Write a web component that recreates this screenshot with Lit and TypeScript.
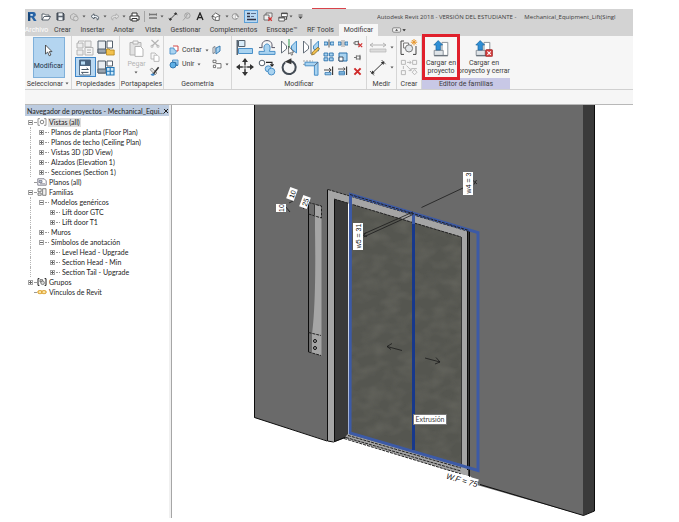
import { LitElement, html, svg, css, nothing, type SVGTemplateResult } from "lit";
import { customElement, property } from "lit/decorators.js";
import { classMap } from "lit/directives/class-map.js";

type Glyph = { w: number; h: number; art: SVGTemplateResult };

const LINE = "#4a5560";
const BLUE = "#4a90c8";
const PALE = "#a9d3f0";
const GREY = "#b4b4b4";

const GLYPHS: Record<string, Glyph> = {
  logo: { w: 10, h: 11, art: svg`<path d="M1 1h5.2a2.6 2.6 0 0 1 .8 5.1L9.6 10H6.8L4.6 6.6H3.2V10H1z" fill="#2763a5"/><path d="M3.2 3h2.6v1.8H3.2z" fill="#cfe3f4"/><path d="M1 1 3.2 3v7H1z" fill="#174678"/>` },
  open: { w: 10, h: 9, art: svg`<path d="M1 8V2h2.5l1 1H8v1.5M1 8l2-3.5h6.5L7.5 8z" fill="#fff" stroke=${LINE} stroke-width=".9"/>` },
  save: { w: 9, h: 9, art: svg`<path d="M1 1h6l1 1v6H1z" fill="#5b6470" stroke="#3b434c"/><path d="M2.5 1.2h4v2.6h-4zM2.5 5.3h4V8h-4z" fill="#eef2f5"/>` },
  sync: { w: 10, h: 10, art: svg`<path d="M1.5 3.5 4.5 1.5l3.5 2v3L5 8.5l-3.5-2z" fill="none" stroke="#a8a8a8"/><circle cx="6.8" cy="6.5" r="2.3" fill="#d8d8d8" stroke="#a8a8a8"/>` },
  undo: { w: 10, h: 8, art: svg`<path d="M4 .8 1 3.4 4 6V4.5c2.2-.2 3.6.4 3.3 2.7C10 5 8.5 2.2 4 2.3z" fill="#eef3f8" stroke=${LINE} stroke-width=".9"/>` },
  redo: { w: 10, h: 8, art: svg`<path d="M6 .8 9 3.4 6 6V4.5c-2.2-.2-3.6.4-3.3 2.7C0 5 1.5 2.2 6 2.3z" fill="#dedede" stroke="#aaa" stroke-width=".9"/>` },
  print: { w: 11, h: 10, art: svg`<path d="M3 4V1h5v3" fill="#fff" stroke="#333"/><path d="M1 4h9v4H1z" fill="#fff" stroke="#333"/><path d="M3 6.5h5V9H3z" fill="#fff" stroke="#333"/>` },
  measure: { w: 10, h: 7, art: svg`<path d="M1 1.5h8M1 5h8" stroke="#777" stroke-width="1.4"/><path d="M1.5 0v3M8.5 0v3" stroke="#777" stroke-width=".6"/>` },
  dim: { w: 10, h: 9, art: svg`<path d="M2 7.5 8 1.5" stroke="#333" stroke-width=".9"/><path d="M.6 6.4 3 8.6M7 .5l2.4 2.2M1.6 8l.6-2 1.4 1.4zM8.4 1l-.6 2-1.4-1.4z" fill="#333" stroke="#333" stroke-width=".8"/>` },
  tag: { w: 9, h: 9, art: svg`<circle cx="5.4" cy="3.6" r="2.7" fill="none" stroke="#9a9a9a" stroke-width=".9"/><path d="M3.4 5.5 1 8.4M4.6 4.8V2.6h1.4" stroke="#9a9a9a" fill="none" stroke-width=".8"/>` },
  letter: { w: 8, h: 9, art: svg`<path d="M1 8 4 1l3 7M2 5.6h4" fill="none" stroke="#222" stroke-width="1.3"/>` },
  home: { w: 10, h: 10, art: svg`<path d="M.7 4.6 4.6 1l4.6 2.8-1 .8v3.8H4.4L1.8 7V4z" fill="#fff" stroke="#444" stroke-width=".8"/><path d="M1.6 4 4.4 5.4V8.4M4.4 5.4 8.6 3.8" stroke="#444" stroke-width=".7" fill="none"/>` },
  section: { w: 9, h: 9, art: svg`<circle cx="4" cy="4.5" r="2.8" fill="#e9e9e9" stroke="#888" stroke-width=".8"/><path d="M4.6.7 8.3 4.5 4.6 8.3z" fill="#999"/><path d="M5 3v3h2z" fill="#fff"/>` },
  thin: { w: 11, h: 9, art: svg`<path d="M1 1.5h3M1 4.5h3M1 7.5h9" stroke="#334" stroke-width="1.3"/><path d="M5 1.5h5M5 4.5h3" stroke="#346" stroke-width=".7"/>` },
  closeWin: { w: 10, h: 10, art: svg`<path d="M3 3V1h6v4M1 3h5v5H1z" fill="#eee" stroke="#555" stroke-width=".8"/><path d="m5.4 5.4 3.4 3.4m0-3.4L5.4 8.8" stroke="#d22f2f" stroke-width="1.3"/>` },
  switchWin: { w: 10, h: 10, art: svg`<path d="M3.5 1h5.8v3.6H3.5zM.8 5.2h5.6V9H.8z" fill="#fff" stroke="#444" stroke-width=".8"/><path d="M3.5 1.6h5.8M.8 5.9h5.6M8.6 5v2.4H7.2" stroke="#444" fill="none"/>` },
  caret: { w: 4, h: 3, art: svg`<path d="M.5.6h3L2 2.4z" fill="#555"/>` },
  menu: { w: 5, h: 6, art: svg`<path d="M.5 1h4" stroke="#444" stroke-width=".8"/><path d="M.3 2.6h4.4L2.5 5z" fill="#444"/>` },
  panelMenu: { w: 14, h: 6, art: svg`<rect x=".6" y=".8" width="8" height="4.4" rx="1.2" fill="#eee" stroke="#666" stroke-width=".7"/><path d="M3.2 3.8h2.8L4.6 2z" fill="#333"/><path d="M10.4 2.2h3.4L12.1 4.2z" fill="#222"/>` },
  cursor: { w: 9, h: 13, art: svg`<path d="M1.5 1v9l2.2-1.9 1.5 3.7 1.7-.8-1.6-3.4H8z" fill="#fff" stroke="#333" stroke-width=".8"/>` },
  typesOff: { w: 18, h: 17, art: svg`<path d="M1 4h6v5H1zM9 2h6v6H9zM1 11h6v5H1z" fill="#eee" stroke=${GREY}/><path d="M2.5 4V2h6M9 8.5h8V16H9z" fill="#f4f4f4" stroke=${GREY}/><path d="M11 11h4M11 13.5h4" stroke=${GREY}/>` },
  typesFolder: { w: 18, h: 17, art: svg`<path d="M1 2h7.5v12H1z" fill="#e9edf1" stroke="#55606c"/><path d="M10 2h5.500v7H10z" fill="#fff" stroke="#55606c"/><path d="M1 10h8v4H1z" fill="#9aa5b0" stroke="#55606c"/><path d="M9.5 10h2.6l.8 1h4.3v5H9.5z" fill="#f2c14e" stroke="#b38316" stroke-width=".8"/>` },
  props: { w: 16, h: 17, art: svg`<path d="M2.500 1h11v15h-11z" fill="#fff" stroke="#55708c"/><path d="M2.500 1h11v6h-11z" fill="#4a6480"/><path d="M4 2.4h4v3.2H4z" fill="#b8dcf5"/><path d="M4.5 10.5h7M9.6 9l1.9 1.5M4.500 13.400h7M6.3 15l-1.8-1.6" stroke="#345" stroke-width=".9" fill="none"/>` },
  typesGrid: { w: 18, h: 17, art: svg`<path d="M1 2h7.5v12H1z" fill="#e9edf1" stroke="#55606c"/><path d="M10 2h5.5v5H10z" fill="#fff" stroke="#55606c"/><path d="M1 10h8v4H1z" fill="#9aa5b0" stroke="#55606c"/><path d="M9.5 8.5H17V16H9.5zM13.2 8.5V16M9.5 12.2H17" fill="#cfeafb" stroke="#2277b8" stroke-width="1.1"/>` },
  paste: { w: 15, h: 17, art: svg`<path d="M1 2.5h11V15H1z" fill="#e2e2e2" stroke=${GREY}/><path d="M4 1h5v3H4z" fill="#f5f5f5" stroke=${GREY}/><path d="M6 6.5h5.5L14 9v7.4H6z" fill="#fff" stroke=${GREY}/>` },
  cut: { w: 10, h: 9, art: svg`<path d="M1.5 1 8 7M8.5 1 2 7" stroke=${GREY} stroke-width="1.2"/><path d="M1 6.4h2v1.8H1zM7 6.4h2v1.8H7z" fill="none" stroke=${GREY} stroke-width=".8"/>` },
  copyClip: { w: 10, h: 10, art: svg`<path d="M1 1h4l1.5 1.5V7H1z" fill="#f7f7f7" stroke=${GREY} stroke-width=".9"/><path d="M4 3.2h3.4L9 4.8v4.6H4z" fill="#fff" stroke=${GREY} stroke-width=".9"/>` },
  brush: { w: 11, h: 11, art: svg`<path d="M1 3.5 3 2l5 5-2 2z" fill="#dcdcdc" stroke="#777" stroke-width=".7"/><path d="M4 8.5 9.6 1.2" stroke="#333" stroke-width="1.5"/><path d="M1.5 8.5c2-1.6 4-1 4 .2S3 10.6 1.5 8.5z" fill="#3d86c6"/>` },
  cutGeo: { w: 10, h: 10, art: svg`<path d="M4 1h5v5H7" fill="#fff" stroke="#c33" stroke-width=".9"/><path d="M1 3h4v1.6c1.4 0 2.2 1 2.2 2.2A2.3 2.3 0 0 1 5 9H1z" fill=${PALE} stroke=${BLUE} stroke-width=".9"/>` },
  joinGeo: { w: 10, h: 10, art: svg`<path d="M3.6 1H9v5.2H7.3" fill=${PALE} stroke=${BLUE} stroke-width=".9"/><circle cx="4" cy="6" r="3" fill="#5fb0e6" stroke="#2b72ac" stroke-width=".9"/><path d="M3.6 1v2.4M4 3.4h3v3h2" stroke="#2b72ac" fill="none" stroke-width=".8"/>` },
  face: { w: 10, h: 10, art: svg`<path d="M1 2.5 3 1.5v6l-2 1z" fill="#fff" stroke=${LINE} stroke-width=".7"/><path d="M4 3l4-2v5L4 9z" fill=${PALE} stroke="#2b72ac" stroke-width=".9"/>` },
  paint: { w: 10, h: 10, art: svg`<path d="M1 1.2h3v2.4H1zM3.8 4.6H9V9H5M1.4 6.2h2.2v2.4H1.4z" fill="#fff" stroke="#555" stroke-width=".8"/>` },
  align: { w: 18, h: 17, art: svg`<path d="M1.2 1v15" stroke="#345" stroke-width="1.2"/><path d="M2.5 1.5h6.4v6H2.5z" fill="#d9ecf9" stroke="#55606c"/><path d="M2.5 9.5h14v5h-14z" fill=${PALE} stroke=${BLUE}/>` },
  offset: { w: 18, h: 17, art: svg`<path d="M1 8.600h3.200C3.200 4 5.500 1.600 9 1.600S14.800 4 13.800 8.600H17" fill="none" stroke="#556" stroke-width="1"/><path d="M1 15.4v-3h5.600C5 8 6.5 5 9 5s4 3 2.400 7.400H17v3z" fill=${PALE} stroke=${BLUE}/>` },
  mirrorPick: { w: 18, h: 17, art: svg`<path d="M1.500 14V2l5 5v3z" fill="#fff" stroke="#55606c" stroke-width=".9"/><path d="M16.500 14V2l-5 5v3z" fill=${PALE} stroke=${BLUE}/><path d="M9 0v10" stroke="#2a9a4a" stroke-width="1"/><path d="M8.6 7v8l1.8-1.4 1.1 2.6 1.2-.6-1-2.4h2.1z" fill="#fff" stroke="#222" stroke-width=".6"/>` },
  mirrorDraw: { w: 18, h: 17, art: svg`<path d="M1.500 14V2l5 5v3z" fill="#fff" stroke="#55606c" stroke-width=".9"/><path d="M16.500 12V2l-5 5v3z" fill=${PALE} stroke=${BLUE}/><path d="M9 0v15" stroke="#345" stroke-width=".8"/><path d="m9.6 16 .8-2.8 5.6-5 1.6 1.8-5.4 5.2z" fill="#f2c14e" stroke="#7a5a14" stroke-width=".7"/>` },
  move: { w: 18, h: 18, art: svg`<path d="M9 1v16M1 9h16" stroke="#333" stroke-width="1.5"/><path d="m9 0 3 4H6zM9 18l3-4H6zM0 9l4-3v6zM18 9l-4-3v6z" fill="#333"/><circle cx="9" cy="9" r="2.3" fill="#f5f5f5"/><path d="M9 7v4M7 9h4" stroke="#333" stroke-width=".7"/>` },
  copy: { w: 18, h: 17, art: svg`<circle cx="4" cy="4" r="2.8" fill="#fff" stroke="#55606c"/><path d="M8 3.4h6V7M12.4 5.4 14 7.2l1.6-1.8" fill="none" stroke="#222" stroke-width="1.1"/><circle cx="10.2" cy="9.8" r="3" fill=${PALE} stroke=${BLUE}/><circle cx="13.4" cy="12.6" r="3.4" fill=${PALE} stroke=${BLUE}/>` },
  rotate: { w: 18, h: 18, art: svg`<path d="M5.2 4.2A6.6 6.6 0 1 0 10.4 3" fill="none" stroke="#444c55" stroke-width="2"/><path d="M4.6 3.8 11.4.2v6z" fill="#333"/>` },
  trim: { w: 18, h: 17, art: svg`<path d="M1 2h10M1 5.4h7.6" stroke="#9a9a9a" stroke-width=".9" stroke-dasharray="2 1"/><path d="M3 3.200h13v13h-3.600V6.800H3z" fill=${PALE} stroke=${BLUE}/><path d="M12.400 6.800 16 3.200" stroke="#445" stroke-width=".8"/>` },
  split: { w: 10, h: 9, art: svg`<path d="M0 3h3.6v3H0zM6.4 3H10v3H6.4z" fill=${PALE} stroke="#2b72ac" stroke-width=".9"/><path d="M5 .5v8" stroke="#333" stroke-width=".8"/>` },
  splitGap: { w: 10, h: 9, art: svg`<path d="M0 3h3v3H0zM7 3h3v3H7z" fill=${PALE} stroke="#2b72ac" stroke-width=".9"/><path d="M4 1v7M6 1v7" stroke="#777" stroke-width=".7"/>` },
  unpin: { w: 10, h: 9, art: svg`<path d="M0 4h2M2 2v4M2 2.6h3.4v3H2M5.4 1.6v5" stroke="#666" stroke-width=".9" fill="none"/><path d="m5.4 4.4 3.8 3.8m0-3.8L5.4 8.2" stroke="#d22f2f" stroke-width="1.2"/>` },
  array: { w: 11, h: 10, art: svg`<path d="M1 1h3.8v3H1zM6.4 1h3.8v3H6.4zM1 5.8h3.8v3H1zM6.4 5.8h3.8v3H6.4z" fill=${PALE} stroke="#2b72ac" stroke-width=".9"/>` },
  scale: { w: 10, h: 10, art: svg`<path d="M1 1h8v8H1z" fill=${PALE} stroke="#2b72ac"/><path d="M1 5h4v4H1z" fill="#fff" stroke="#345" stroke-width=".9"/>` },
  pin: { w: 9, h: 9, art: svg`<path d="M1 4.5h2.4M3.4 2.4v4.2M3.4 3H7v3H3.4M7 1.8v5.4" stroke="#666" stroke-width=".9" fill="none"/>` },
  extend: { w: 10, h: 10, art: svg`<path d="M8.6.5v8.6" stroke="#333" stroke-width="1.1"/><path d="M0 4h7M5 2l2.2 2L5 6" stroke="#333" fill="none" stroke-width=".9"/><path d="M1 6.6h6v2.2H1z" fill=${PALE} stroke="#2b72ac" stroke-width=".8"/>` },
  extendAll: { w: 10, h: 10, art: svg`<path d="M8.6.5v8.6" stroke="#333" stroke-width="1.1"/><path d="M0 3h7M5.4 1.4 7.2 3 5.4 4.6" stroke="#333" fill="none" stroke-width=".8"/><path d="M1 5.4h5.6v3.4H1zM1 7.1h5.6" fill=${PALE} stroke="#2b72ac" stroke-width=".8"/>` },
  remove: { w: 9, h: 9, art: svg`<path d="m1.4 1.4 6.2 6.2m0-6.2L1.4 7.6" stroke="#cf2a2a" stroke-width="2"/>` },
  measureOff: { w: 18, h: 11, art: svg`<path d="M1 3h16M4 1 1 3l3 2M14 1l3 2-3 2" fill="none" stroke=${GREY}/><path d="M1 7h16v3H1z" fill="#dcdcdc" stroke=${GREY} stroke-width=".7"/>` },
  dimension: { w: 18, h: 17, art: svg`<path d="M3 14.4 14.6 3.2" stroke="#333"/><path d="M1 12l4 4.4M12.6 1l4 4.2" stroke="#333" stroke-width=".8"/><path d="m2.2 15 1-3.6 2.6 2.8zM15.4 2.4l-1 3.6-2.6-2.8z" fill="#333"/>` },
  group: { w: 18, h: 17, art: svg`<path d="M4 2H1v13.4h3M13 15.4h3V7" fill="none" stroke="#444"/><path d="M3.6 4h5v5h-5z" fill="#fff" stroke="#777"/><circle cx="9" cy="9.4" r="3.6" fill="#e3e7ea" stroke="#777"/><path d="M14 0v6.4M10.8 3.2h6.4M11.8 1l4.4 4.4M16.2 1l-4.4 4.4" stroke="#e8962a" stroke-width="1"/>` },
  similar: { w: 18, h: 17, art: svg`<path d="M1.4 1.4h4v4h-4zM12.6 1.4h4v4h-4zM1.4 11.6h4v4h-4zM12 9.6h4.8M7 3.4h4M9.6 2l1.6 1.4L9.6 5M3.4 7v3M6.6 6.6l4.4 4.6M8.6 11.6h2.6V9M14.6 10.6l2.4 2.6-2.4 2.6-2.4-2.6z" fill="none" stroke=${GREY} stroke-width=".9"/>` },
  load: { w: 16, h: 17, art: svg`<path d="M9 2.4h5.8v13H9z" fill="#fff" stroke="#8b939b"/><path d="M1.2 10.4h9v5h-9z" fill="#dfe4e8" stroke="#8b939b"/><path d="M1.2 15.8h13.6" stroke="#59626b"/><path d="M5.2.6 9.6 5H7.4v5H3V5H.8z" fill="#2f8fd6" stroke="#1c659e" stroke-width=".7"/>` },
  loadClose: { w: 18, h: 17, art: svg`<path d="M9 2.4h5.8v13H9z" fill="#fff" stroke="#8b939b"/><path d="M1.2 10.4h9v5h-9z" fill="#dfe4e8" stroke="#8b939b"/><path d="M1.2 15.8h10" stroke="#59626b"/><path d="M5.2.6 9.6 5H7.4v5H3V5H.8z" fill="#2f8fd6" stroke="#1c659e" stroke-width=".7"/><rect x="10.6" y="9.6" width="7" height="7" rx="1" fill="#d23c3c" stroke="#8e1f1f" stroke-width=".6"/><path d="m12.4 11.4 3.4 3.4m0-3.4-3.4 3.4" stroke="#fff" stroke-width="1.1"/>` },
  views: { w: 10, h: 8, art: svg`<path d="M3 .7H1v6.6h2M7 .7h2v6.6H7" fill="none" stroke="#777" stroke-width=".8"/><circle cx="5" cy="4" r="1.8" fill="#fff" stroke="#666" stroke-width=".8"/>` },
  sheets: { w: 10, h: 8, art: svg`<path d="M.8.8h6.4l2 2v4.4H.8z" fill="#fff" stroke="#667" stroke-width=".8"/><path d="M2 2.6h3v2H2zM3 5.8h5" fill="#bcd" stroke="#667" stroke-width=".7"/>` },
  families: { w: 10, h: 8, art: svg`<path d="M1 .7h3.2v3H1zM5.6.7H9v6.6H5.6zM1 5h3.2v2.3H1z" fill="#f2f2f2" stroke="#666" stroke-width=".8"/>` },
  groups: { w: 10, h: 8, art: svg`<path d="M2.4.6H1v6.8h1.4M7.6.6H9v6.8H7.6" fill="none" stroke="#222"/><path d="M3 1.6h2.6V4H3z" fill="#ccc" stroke="#555" stroke-width=".7"/><circle cx="5.6" cy="4.8" r="1.8" fill="#ddd" stroke="#555" stroke-width=".7"/>` },
  links: { w: 10, h: 8, art: svg`<rect x=".8" y="2.6" width="4.4" height="3" rx="1.5" fill="#fbe6a6" stroke="#d9981c"/><rect x="4.8" y="2.6" width="4.4" height="3" rx="1.5" fill="#fbe6a6" stroke="#d9981c"/>` },
  cross: { w: 6, h: 6, art: svg`<path d="m1 1 4 4m0-4L1 5" stroke="#222"/>` },
};

const glyph = (name: string) => {
  const g = GLYPHS[name];
  return html`<svg class="glyph" width=${g.w} height=${g.h} viewBox="0 0 ${g.w} ${g.h}" aria-hidden="true">${g.art}</svg>`;
};

const base = css`
  :host { display: block; font: 7px/10px Roboto, "Open Sans", sans-serif; color: #3c3c3c; }
  * { box-sizing: border-box; }
  button { font: inherit; color: inherit; background: none; border: 0; padding: 0; margin: 0; display: flex; align-items: center; justify-content: center; white-space: nowrap; min-width: 0; }
  .glyph { display: block; flex: none; }
`;

@customElement("quick-bar")
class QuickBar extends LitElement {
  static styles = [base, css`
    .bar { display: flex; align-items: center; height: 15px; background: #d3d3d3; overflow: hidden; }
    .tools { display: grid; flex: none; height: 13px; grid-template-columns: 13px 16px 13px 13px 8px 13px 7px 13px 6px 14px 6px 11px 8px 14px 12px 16px 16px 5px 13px 18px 16px 13px 4px 14px; }
    .on { background: #b9d8f2; border: 1px solid #5c9fd6; margin: 0 2px; }
    .rule { width: 1px; height: 11px; background: #a5a5a5; justify-self: center; align-self: center; }
    .title { flex: 1; min-width: 0; margin-left: 70px; display: flex; gap: 8px; font-family: "Open Sans", sans-serif; font-size: 6px; white-space: pre; overflow: hidden; }
  `];
  render() {
    const items = ["logo", "open", "save", "sync", "caret", "undo", "caret", "redo", "caret", "print", "|", "measure", "caret", "dim", "tag", "letter", "home", "caret", "section", "thin", "closeWin", "switchWin", "caret", "menu"];
    return html`<header class="bar">
      <div class="tools">${items.map((n) => n === "|" ? html`<span class="rule"></span>` : html`<button class=${classMap({ on: n === "thin" })} aria-label=${n}>${glyph(n)}</button>`)}</div>
      <div class="title"><span>Autodesk Revit 2018 - VERSIÓN DEL ESTUDIANTE -</span><span>Mechanical_Equipment_Lift(Singl</span></div>
    </header>`;
  }
}

@customElement("ribbon-tabs")
class RibbonTabs extends LitElement {
  static styles = [base, css`
    .tabs { display: grid; grid-template-columns: 23px 29px 31px 32px 26px 39px 57px 40px 37px 39px 34px; height: 12px; background: #d3d3d3; }
    .file { color: #fff; }
    .active { background: #f6f6f6; }
    .extra { padding-left: 8px; }
  `];
  render() {
    const tabs = ["Archivo", "Crear", "Insertar", "Anotar", "Vista", "Gestionar", "Complementos", "Enscape™", "RF Tools", "Modificar"];
    return html`<nav class="tabs">
      ${tabs.map((t, i) => html`<button class=${classMap({ file: i === 0, active: i === 9 })}>${t}</button>`)}
      <button class="extra" aria-label="Panel">${glyph("panelMenu")}</button>
    </nav>`;
  }
}

@customElement("tool-ribbon")
class ToolRibbon extends LitElement {
  static styles = [base, css`
    .ribbon { display: flex; height: 54px; background: #f6f6f6; border-bottom: 1px solid #d0d0d0; }
    .panel { display: grid; grid-template-rows: 42px 11px; flex: none; border-right: 1px solid #d6d6d6; }
    .panel h2 { margin: 0; font: inherit; text-align: center; white-space: nowrap; display: flex; align-items: center; justify-content: center; gap: 2px; }
    .w1 { width: 47px; } .w2 { width: 48px; } .w3 { width: 44px; } .w4 { width: 68px; } .w5 { width: 135px; } .w6 { width: 30px; } .w7 { width: 25px; } .w8 { width: 88px; border-right: 0; }
    .w8 h2 { background: #c8c8e6; }
    .body { display: grid; align-items: center; justify-items: center; align-content: center; justify-content: center; }
    .stack { flex-direction: column; gap: 2px; }
    .modify { width: 32px; height: 41px; background: #b4d5f0; border: 1px solid #7fb0da; gap: 4px; color: #234; margin-left: 1px; }
    .quad { grid-template: 20px 20px / 21px 21px; }
    .on { background: #b9d8f2; border: 1px solid #3f87c9; width: 21px; height: 20px; }
    .clip { grid-template-columns: 20px 16px; padding-left: 6px; }
    .trio { display: grid; grid-template-rows: repeat(3, 14px); align-items: center; justify-items: center; }
    .off { color: #b4b4b4; }
    .geo { grid-template: 14px 14px / 43px 18px; justify-items: start; justify-content: start; padding-left: 5px; }
    .row { gap: 3px; }
    .mods { grid-template-columns: 88px 43px; }
    .big { display: grid; grid-template: 20px 20px / repeat(4, 22px); align-items: center; justify-items: center; }
    .small { display: grid; grid-template: repeat(3, 14px) / 14px 15px 14px; align-items: center; justify-items: center; }
    .duo { grid-template-rows: 20px 20px; }
    .load { grid-template-columns: 38px 48px; justify-content: start; text-align: center; }
    .load button { white-space: pre; line-height: 8px; height: 40px; }
    .marked { outline: 3px solid #e0202c; width: 32px; position: relative; }
    .strip { height: 15px; background: #f6f6f6; border-bottom: 1px solid #b8b8b8; }
  `];
  private tool(name: string, cls = "") {
    return html`<button class=${cls} aria-label=${name}>${glyph(name)}</button>`;
  }
  private panel(width: string, title: string, body: unknown, arrow = false) {
    return html`<section class="panel ${width}">${body}<h2>${title}${arrow ? glyph("caret") : nothing}</h2></section>`;
  }
  render() {
    const t = (n: string) => this.tool(n);
    return html`<div class="ribbon">
      ${this.panel("w1", "Seleccionar", html`<div class="body"><button class="stack modify">${glyph("cursor")}<span>Modificar</span></button></div>`, true)}
      ${this.panel("w2", "Propiedades", html`<div class="body quad">${t("typesOff")}${t("typesFolder")}${this.tool("props", "on")}${t("typesGrid")}</div>`)}
      ${this.panel("w3", "Portapapeles", html`<div class="body clip"><button class="stack off">${glyph("paste")}<span>Pegar</span>${glyph("caret")}</button><div class="trio">${t("cut")}${t("copyClip")}${t("brush")}</div></div>`)}
      ${this.panel("w4", "Geometría", html`<div class="body geo"><button class="row">${glyph("cutGeo")}<span>Cortar</span>${glyph("caret")}</button>${t("face")}<button class="row">${glyph("joinGeo")}<span>Unir</span>${glyph("caret")}</button><button class="row">${glyph("paint")}${glyph("caret")}</button></div>`)}
      ${this.panel("w5", "Modificar", html`<div class="body mods"><div class="big">${["align", "offset", "mirrorPick", "mirrorDraw", "move", "copy", "rotate", "trim"].map(t)}</div><div class="small">${["split", "splitGap", "unpin", "array", "scale", "pin", "extend", "extendAll", "remove"].map(t)}</div></div>`)}
      ${this.panel("w6", "Medir", html`<div class="body duo"><button class="row off">${glyph("measureOff")}${glyph("caret")}</button><button class="row">${glyph("dimension")}${glyph("caret")}</button></div>`)}
      ${this.panel("w7", "Crear", html`<div class="body duo">${t("group")}${t("similar")}</div>`)}
      ${this.panel("w8", "Editor de familias", html`<div class="body load"><button class="stack marked">${glyph("load")}<span>Cargar en
proyecto</span></button><button class="stack">${glyph("loadClose")}<span>Cargar en
proyecto y cerrar</span></button></div>`)}
    </div><div class="strip"></div>`;
  }
}

type Node = { label: string; depth: number; box?: "+" | "-"; icon?: string; selected?: boolean };

@customElement("project-browser")
class ProjectBrowser extends LitElement {
  static styles = [base, css`
    :host { font-family: Lato, "Open Sans", sans-serif; }
    .head { display: flex; align-items: center; justify-content: space-between; height: 11px; padding: 0 2px 0 2px; background: #bccbdf; color: #222; white-space: nowrap; }
    .tree { list-style: none; margin: 1px 0 0; padding: 0; color: #222; }
    .tree li { display: flex; align-items: center; height: 10px; padding-left: 3px; gap: 1px; }
    .d1 .rail { width: 8px; }
    .d2 .rail { width: 19px; }
    .rail { height: 10px; border-left: 1px dotted #b5b5b5; margin-left: 2px; flex: none; width: 0; }
    .d0 .rail { display: none; }
    .box { width: 5px; height: 5px; border: 1px solid #a6a6a6; background: linear-gradient(#666, #666) center / 3px 1px no-repeat #fff; flex: none; }
    .plus { background: linear-gradient(#666, #666) center / 3px 1px no-repeat, linear-gradient(#666, #666) center / 1px 3px no-repeat #fff; }
    .none { visibility: hidden; }
    .dash { width: 4px; border-top: 1px dotted #999; flex: none; }
    .d0 .dash { width: 2px; }
    .text { white-space: nowrap; padding: 0 1px; line-height: 9px; }
    .sel { background: #dedede; }
  `];
  @property({ attribute: false }) nodes: Node[] = [
    { label: "Vistas (all)", depth: 0, box: "-", icon: "views", selected: true },
    { label: "Planos de planta (Floor Plan)", depth: 1, box: "+" },
    { label: "Planos de techo (Ceiling Plan)", depth: 1, box: "+" },
    { label: "Vistas 3D (3D View)", depth: 1, box: "+" },
    { label: "Alzados (Elevation 1)", depth: 1, box: "+" },
    { label: "Secciones (Section 1)", depth: 1, box: "+" },
    { label: "Planos (all)", depth: 0, icon: "sheets" },
    { label: "Familias", depth: 0, box: "-", icon: "families" },
    { label: "Modelos genéricos", depth: 1, box: "-" },
    { label: "Lift door GTC", depth: 2, box: "+" },
    { label: "Lift door T1", depth: 2, box: "+" },
    { label: "Muros", depth: 1, box: "+" },
    { label: "Símbolos de anotación", depth: 1, box: "-" },
    { label: "Level Head - Upgrade", depth: 2, box: "+" },
    { label: "Section Head - Min", depth: 2, box: "+" },
    { label: "Section Tail - Upgrade", depth: 2, box: "+" },
    { label: "Grupos", depth: 0, box: "+", icon: "groups" },
    { label: "Vínculos de Revit", depth: 0, icon: "links" },
  ];
  render() {
    return html`<div class="head"><span>Navegador de proyectos - Mechanical_Equi...</span><button aria-label="Cerrar">${glyph("cross")}</button></div>
      <ul class="tree">${this.nodes.map((n) => html`<li class="d${n.depth}"><span class="rail"></span><span class=${classMap({ box: true, plus: n.box === "+", none: !n.box })}></span><span class="dash"></span>${n.icon ? glyph(n.icon) : nothing}<span class=${classMap({ text: true, sel: !!n.selected })}>${n.label}</span></li>`)}</ul>`;
  }
}

@customElement("model-view")
class ModelView extends LitElement {
  static styles = [base, css`
    .scene { display: block; width: 100%; height: auto; }
    .wall { fill: #6a6a6a; } .side { fill: #3a3a3a; } .light { fill: #a5a5a5; } .door { fill: #555650; } .white { fill: #fff; }
    .edge { fill: none; stroke: #0c0c0c; stroke-width: 1; }
    .hair { fill: none; stroke: #1a1a1a; stroke-width: .8; }
    .fine { fill: none; stroke: #222; stroke-width: 1; stroke-dasharray: 3 1; }
    .pick { fill: none; stroke: #3c5aa6; stroke-width: 3; }
    .deep { stroke: #17388c; }
    .tag { font: 7px "Liberation Sans", sans-serif; fill: #111; text-anchor: middle; }
    .note { font: italic 8px "Liberation Sans", sans-serif; }
    .tip { fill: #fff; stroke: #777; }
    .tiptext { font: 7px Lato, sans-serif; fill: #444; text-anchor: middle; }
  `];
  render() {
    return html`<svg class="scene" viewBox="172 105 461 413" role="img" aria-label="Vista 3D">
      <defs>
        <filter id="grain" x="0" y="0" width="1" height="1">
          <feTurbulence type="fractalNoise" baseFrequency=".06 .09" numOctaves="2" seed="4" result="n"/>
          <feColorMatrix in="n" type="matrix" values="0 0 0 0 .14  0 0 0 0 .14  0 0 0 0 .12  1.3 0 0 0 -.5"/>
          <feComposite in2="SourceGraphic" operator="in"/>
        </filter>
      </defs>
      <path class="wall" d="M254 105H583.5V515.5L477 485 461 478 440 470 345 441 328 441 254 417.5z"/>
      <path class="side" d="M583 105H594.5V511L583 515.5z"/>
      <path class="edge" d="M254.5 105V417.5L327 441M594.5 105V511L583.5 515.5 480 484.5"/>
      <path class="white" d="M333 442 346 437 462 474 470 476 478 485 470 500 330 480z"/>

      <path class="light" d="M328 189.5 469.5 231.5V476L461 474V236.5L334.5 199V441.5L328 441z"/>
      <path class="side" d="M334.5 199 348 203V437L334.5 442z"/>
      <path class="white" d="M348 203h1.500v232H348z"/>
      <path class="door" d="M350 204 461 237V464L350 433z"/>
      <path d="M350 204 461 237V464L350 433z" filter="url(#grain)"/>
      <path class="light" d="M348 434 461 465V474L344 438z"/>
      <path class="fine" d="M348 435.500 461 468M346 437.500 461 471M344 438.500 461 474"/>
      <path class="side" d="M468 231h2v245h-2z"/>
      <path class="edge" d="M327.500 189.500V441L333.500 442 346 437M334.500 199.500V442M469.500 231.500V477M467.500 231V470"/>
      <path class="fine" d="M328 189.500 469 231.500M334 199 461 237"/>
      <path class="hair" d="M461.500 237V464"/>

      <path class="pick" d="M350.500 194.500 478 232.500V470.500L350 433z"/>
      <path class="pick deep" d="M413.500 224V450"/>
      <path class="pick" d="M413.500 213V224"/>
      <path class="fine" d="M350 194.500 469 230.500"/>

      <path class="light" d="M314 204.500 321.500 206.500V355.500L312 353V335C314 320 316 290 315 230V216H314z"/>
      <path class="edge" d="M308.500 202V352"/>
      <path class="hair" d="M314.500 205V215"/>
      <path class="fine" d="M308.500 202.500 321.500 206V218L308.500 214M308.500 332.500 321 335.500M308.500 352 321 355.500"/>
      <circle cx="315" cy="341" r="1.500" class="edge"/><circle cx="315" cy="348" r="1.500" class="edge"/>

      <path class="hair" d="M421.500 207.500 464 187.500M473 180.500 477 184M474 184.500 476.500 180M363.500 234 413 212M363.500 237 413 214.500M366 232.500 363.500 235.500 367 236.500"/>
      <path class="hair" d="M402 350.500 387 346.500M392 343.500 387 346.500 391 349.500M425 358 440 362M436 357.500 440 362 435 364"/>
      <path class="hair" d="M285 206 290 212M289 203 293 201M303 209 306 206"/>

      <g transform="translate(281 208) rotate(-90)"><rect class="white" x="-4" y="-5" width="8" height="10"/><text class="tag" y="3">10</text></g>
      <g transform="translate(292 194) rotate(-70)"><rect class="white" x="-6" y="-4" width="12" height="8"/><text class="tag" y="3">10</text></g>
      <g transform="translate(305 202) rotate(-70)"><rect class="white" x="-6" y="-4" width="12" height="8"/><text class="tag" y="3">25</text></g>
      <g transform="translate(358 236) rotate(-90)"><rect class="white" x="-14" y="-5" width="27" height="10"/><text class="tag" y="3">w5 = 31</text></g>
      <g transform="translate(468 183) rotate(-90)"><rect class="white" x="-12" y="-5" width="23" height="10"/><text class="tag" y="3">w4 = 3</text></g>
      <g transform="translate(462 480) rotate(16)"><rect class="white" x="-15" y="-5" width="31" height="9"/><text class="tag note" y="3">W.F = 75</text></g>

      <rect class="tip" x="413.500" y="414.500" width="33" height="10"/>
      <text class="tiptext" x="430" y="422">Extrusión</text>
    </svg>`;
  }
}

@customElement("app-root")
class AppRoot extends LitElement {
  static styles = [base, css`
    :host { background: #fff; padding: 9px 46px 4px 25px; }
    .window { position: relative; }
    .mark { position: absolute; left: 287px; top: -1px; width: 34px; height: 1px; background: #d9434b; }
    .work { display: grid; grid-template-columns: 144px 3px minmax(0, 1fr); }
    .split { border-right: 1px solid #a6a6a6; background: #f0f0f0; }
  `];
  render() {
    return html`<main class="window">
      <quick-bar></quick-bar><ribbon-tabs></ribbon-tabs><tool-ribbon></tool-ribbon>
      <div class="work"><project-browser></project-browser><div class="split"></div><model-view></model-view></div>
      <div class="mark"></div>
    </main>`;
  }
}
